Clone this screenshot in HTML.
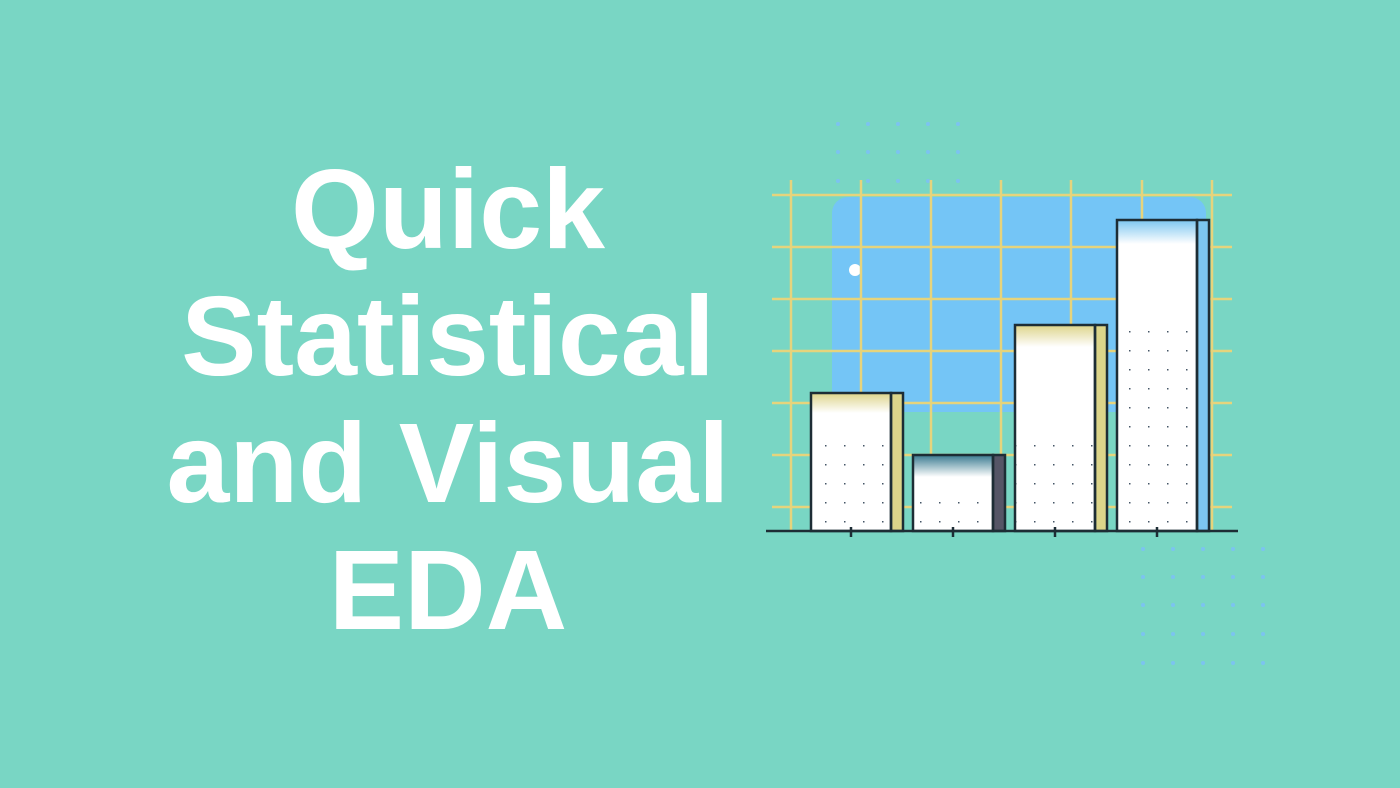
<!DOCTYPE html>
<html><head><style>
html,body{margin:0;padding:0}
body{width:1400px;height:788px;background:#79d6c4;position:relative;overflow:hidden}
.t{position:absolute;left:0;width:896px;text-align:center;color:#fff;font-family:"Liberation Sans",sans-serif;font-weight:bold;font-size:113px;line-height:127px;top:146px}
svg{position:absolute;left:0;top:0}
</style></head><body>
<div class="t">Quick<br>Statistical<br>and Visual<br>EDA</div>
<svg width="1400" height="788">
<defs>
<pattern id="dp" width="19" height="19" patternUnits="userSpaceOnUse"><rect x="8" y="8" width="1.5" height="1.5" fill="#456"/></pattern>
<linearGradient id="gy" x1="0" y1="0" x2="0" y2="1"><stop offset="0" stop-color="#ddd48a"/><stop offset="1" stop-color="#fff"/></linearGradient>
<linearGradient id="gb" x1="0" y1="0" x2="0" y2="1"><stop offset="0" stop-color="#7cc6f0"/><stop offset="1" stop-color="#fff"/></linearGradient>
<linearGradient id="gd" x1="0" y1="0" x2="0" y2="1"><stop offset="0" stop-color="#3a7a90"/><stop offset="1" stop-color="#fff"/></linearGradient>
</defs>
<g fill="#7cc3f0">
<circle cx="838" cy="124" r="2"/><circle cx="868" cy="124" r="2"/><circle cx="898" cy="124" r="2"/><circle cx="928" cy="124" r="2"/><circle cx="958" cy="124" r="2"/>
<circle cx="838" cy="152" r="2"/><circle cx="868" cy="152" r="2"/><circle cx="898" cy="152" r="2"/><circle cx="928" cy="152" r="2"/><circle cx="958" cy="152" r="2"/>
<circle cx="838" cy="181" r="2"/><circle cx="868" cy="181" r="2"/><circle cx="898" cy="181" r="2"/><circle cx="928" cy="181" r="2"/><circle cx="958" cy="181" r="2"/>
</g>
<g fill="#7cc3f0">
<g id="r"><circle cx="1143" cy="549" r="2"/><circle cx="1173" cy="549" r="2"/><circle cx="1203" cy="549" r="2"/><circle cx="1233" cy="549" r="2"/><circle cx="1263" cy="549" r="2"/></g>
<use href="#r" y="28"/><use href="#r" y="56"/><use href="#r" y="85"/><use href="#r" y="114"/>
</g>
<rect x="832" y="197" width="374" height="215" rx="16" fill="#74c5f6"/>
<circle cx="855" cy="270" r="6" fill="#fff"/>
<g stroke="#e6d47c" stroke-width="2.5">
<line x1="772" y1="195" x2="1232" y2="195"/><line x1="772" y1="247" x2="1232" y2="247"/><line x1="772" y1="299" x2="1232" y2="299"/><line x1="772" y1="351" x2="1232" y2="351"/><line x1="772" y1="403" x2="1232" y2="403"/><line x1="772" y1="455" x2="1232" y2="455"/><line x1="772" y1="507" x2="1232" y2="507"/>
<line x1="791" y1="180" x2="791" y2="531"/><line x1="861" y1="180" x2="861" y2="531"/><line x1="931" y1="180" x2="931" y2="531"/><line x1="1001" y1="180" x2="1001" y2="531"/><line x1="1071" y1="180" x2="1071" y2="531"/><line x1="1142" y1="180" x2="1142" y2="531"/><line x1="1212" y1="180" x2="1212" y2="531"/>
</g>
<g fill="none" stroke="none">
<rect x="891" y="393" width="12" height="138" fill="#dcd58a"/>
<rect x="811" y="393" width="80" height="138" fill="#fff"/>
<rect x="811" y="393" width="80" height="20" fill="url(#gy)"/>
<rect x="811" y="430" width="80" height="100" fill="url(#dp)"/>
<rect x="993" y="455" width="12" height="76" fill="#556"/>
<rect x="913" y="455" width="80" height="76" fill="#fff"/>
<rect x="913" y="455" width="80" height="22" fill="url(#gd)"/>
<rect x="913" y="495" width="80" height="35" fill="url(#dp)"/>
<rect x="1095" y="325" width="12" height="206" fill="#dcd58a"/>
<rect x="1015" y="325" width="80" height="206" fill="#fff"/>
<rect x="1015" y="325" width="80" height="22" fill="url(#gy)"/>
<rect x="1015" y="430" width="80" height="100" fill="url(#dp)"/>
<rect x="1197" y="220" width="12" height="311" fill="#7cc6f0"/>
<rect x="1117" y="220" width="80" height="311" fill="#fff"/>
<rect x="1117" y="220" width="80" height="24" fill="url(#gb)"/>
<rect x="1117" y="318" width="80" height="212" fill="url(#dp)"/>
</g>
<g stroke="#1d2d35" stroke-width="2.5" fill="none">
<rect x="891" y="393" width="12" height="138"/><rect x="811" y="393" width="80" height="138"/>
<rect x="993" y="455" width="12" height="76"/><rect x="913" y="455" width="80" height="76"/>
<rect x="1095" y="325" width="12" height="206"/><rect x="1015" y="325" width="80" height="206"/>
<rect x="1197" y="220" width="12" height="311"/><rect x="1117" y="220" width="80" height="311"/>
<line x1="766" y1="531" x2="1238" y2="531"/>
<line x1="851" y1="527" x2="851" y2="537"/><line x1="953" y1="527" x2="953" y2="537"/><line x1="1055" y1="527" x2="1055" y2="537"/><line x1="1157" y1="527" x2="1157" y2="537"/>
</g>
</svg>
</body></html>
